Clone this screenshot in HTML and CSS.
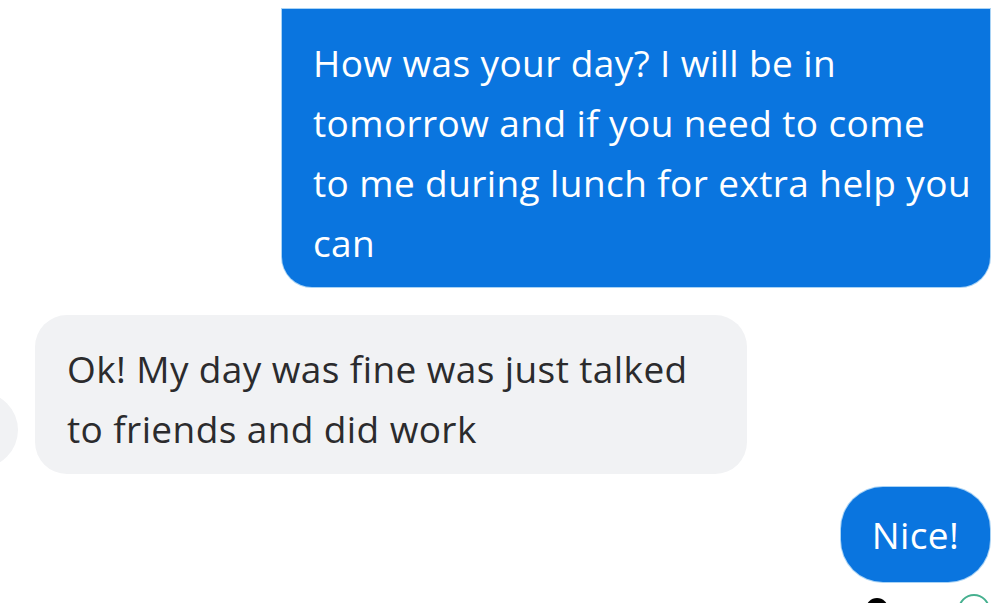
FILE: index.html
```html
<!DOCTYPE html>
<html>
<head>
<meta charset="utf-8">
<link rel="stylesheet" href="styles.css">
</head>
<body>
<div class="thread">
  <div class="row row-out">
    <div class="bubble bubble-out bubble-cont">How was your day? I will be in<br>tomorrow and if you need to come<br>to me during lunch for extra help you<br>can</div>
  </div>
  <div class="row row-in">
    <div class="avatar"></div>
    <div class="bubble bubble-in">Ok! My day was fine was just talked<br>to friends and did work</div>
  </div>
  <div class="row row-out">
    <div class="bubble bubble-out bubble-pill">Nice!</div>
  </div>
  <div class="row row-status">
    <span class="dot-black"></span>
    <span class="ring-green"></span>
  </div>
</div>
</body>
</html>
```

FILE: styles.css
```css
html, body {
  margin: 0;
  padding: 0;
  background: #ffffff;
  overflow: hidden;
}
body {
  width: 1003px;
  height: 603px;
  font-family: "Open Sans", "Noto Sans", sans-serif;
}
.thread {
  display: flex;
  flex-direction: column;
  padding-top: 9px;
}
.row {
  display: flex;
}
.row-out {
  justify-content: flex-end;
  padding-right: 13px;
}
.bubble {
  font-size: 37px;
  letter-spacing: 0.4px;
  line-height: 60px;
  box-sizing: border-box;
  white-space: nowrap;
}
.bubble-out {
  background: #0a75df;
  color: #ffffff;
  box-shadow: 0 0 0 1px #a9d3f5;
}
.bubble-cont {
  width: 708px;
  padding: 24px 20px 14px 31px;
  border-radius: 0 0 30px 30px;
}
.row-in {
  margin-top: 28px;
  align-items: flex-end;
}
.avatar {
  width: 76px;
  height: 76px;
  border-radius: 50%;
  background: #f1f2f4;
  margin-left: -58px;
  margin-right: 17px;
  margin-bottom: 6px;
  flex: none;
}
.bubble-in {
  width: 712px;
  background: #f1f2f4;
  color: #2b2b2d;
  padding: 24px 20px 15px 32px;
  border-radius: 32px;
}
.row-out + .row-out, .row-in + .row-out {
  margin-top: 13px;
}
.bubble-pill {
  width: 149px;
  height: 95px;
  display: flex;
  align-items: center;
  justify-content: center;
  border-radius: 42px;
  padding: 0;
}
.row-status {
  justify-content: flex-end;
  align-items: flex-start;
  padding-right: 13px;
  margin-top: 12px;
  gap: 70px;
}
.dot-black {
  width: 22px;
  height: 22px;
  border-radius: 50%;
  background: #000000;
  margin-top: 4px;
}
.ring-green {
  width: 28px;
  height: 28px;
  border-radius: 50%;
  border: 2px solid #46b08f;
}
```
